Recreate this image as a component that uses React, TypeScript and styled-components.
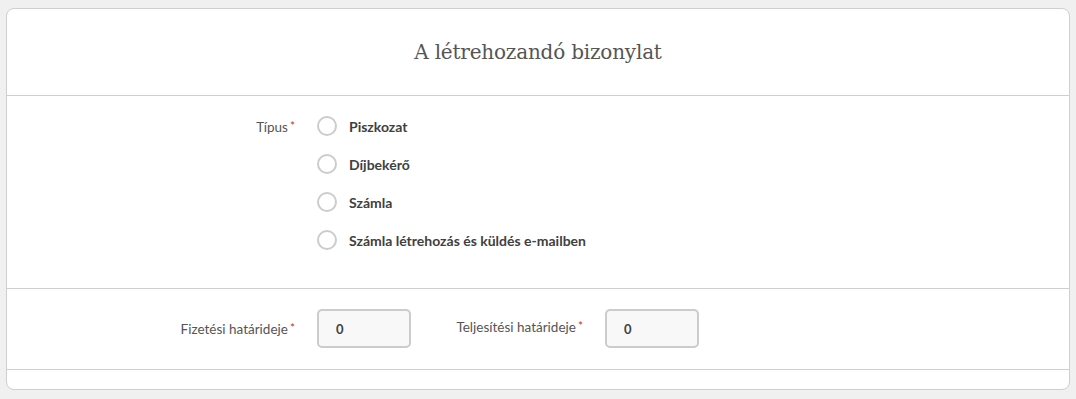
import React from "react";
import styled, { createGlobalStyle } from "styled-components";

const Global = createGlobalStyle`
  html, body { margin: 0; padding: 0; background: #f0f0f0; }
  body { font-family: "Lato", "Open Sans", sans-serif; }
  * { box-sizing: border-box; }
`;

const Page = styled.div`
  padding: 8px 6px 8px 6px;
`;

const Card = styled.div`
  background: #fff;
  border: 1px solid #cfcfcf;
  border-radius: 8px;
  overflow: hidden;
`;

const Header = styled.div`
  height: 86px;
  display: flex;
  align-items: center;
  justify-content: center;
`;

const Title = styled.h2`
  margin: 0;
  font-family: "DejaVu Serif", serif;
  font-weight: 400;
  font-size: 20px;
  color: #555;
  letter-spacing: -0.2px;
`;

const Section = styled.div<{ $pt: number; $pb: number }>`
  border-top: 1px solid #cfcfcf;
  padding: ${(p) => p.$pt}px 0 ${(p) => p.$pb}px 0;
`;

const Footer = styled.div`
  border-top: 1px solid #cfcfcf;
  height: 20px;
`;

const Row = styled.div`
  display: grid;
  grid-template-columns: 288px 1fr;
  column-gap: 22px;
  align-items: start;
`;

const Label = styled.label`
  text-align: right;
  font-size: 13.5px;
  color: #555;
  line-height: 20px;
  white-space: nowrap;
`;

const Req = styled.span`
  color: #c0392b;
  font-size: 12px;
  margin-left: 2px;
  vertical-align: 2px;
`;

const RadioList = styled.div`
  display: flex;
  flex-direction: column;
  gap: 18px;
`;

const RadioItem = styled.label`
  display: flex;
  align-items: center;
  gap: 12px;
  height: 20px;
  font-size: 14px;
  font-weight: 700;
  color: #404040;
`;

const Circle = styled.span`
  width: 20px;
  height: 20px;
  border: 2px solid #cccccc;
  border-radius: 50%;
  background: #fff;
  flex: none;
`;

const FieldRow = styled.div`
  display: flex;
  align-items: center;
`;

const FieldLabel = styled(Label)<{ $w: number; $raise?: number }>`
  width: ${(p) => p.$w}px;
  margin-right: 22px;
  margin-bottom: ${(p) => p.$raise ?? 0}px;
  flex: none;
`;

const Input = styled.div`
  width: 94px;
  height: 39px;
  border: 2px solid #cccccc;
  border-radius: 5px;
  background: #f8f8f8;
  display: flex;
  align-items: center;
  padding-left: 17px;
  font-size: 13px;
  font-weight: 700;
  color: #404040;
  margin-right: 44px;
`;

const options = [
  "Piszkozat",
  "Díjbekérő",
  "Számla",
  "Számla létrehozás és küldés e-mailben",
];

export default function App() {
  return (
    <>
      <Global />
      <Page>
        <Card>
          <Header>
            <Title>A létrehozandó bizonylat</Title>
          </Header>
          <Section $pt={20} $pb={38}>
            <Row>
              <Label>
                Típus<Req>*</Req>
              </Label>
              <RadioList>
                {options.map((o) => (
                  <RadioItem key={o}>
                    <Circle />
                    {o}
                  </RadioItem>
                ))}
              </RadioList>
            </Row>
          </Section>
          <Section $pt={20} $pb={21}>
            <FieldRow>
              <FieldLabel $w={288}>
                Fizetési határideje<Req>*</Req>
              </FieldLabel>
              <Input>0</Input>
              <FieldLabel $w={128} $raise={4}>
                Teljesítési határideje<Req>*</Req>
              </FieldLabel>
              <Input>0</Input>
            </FieldRow>
          </Section>
          <Footer />
        </Card>
      </Page>
    </>
  );
}
